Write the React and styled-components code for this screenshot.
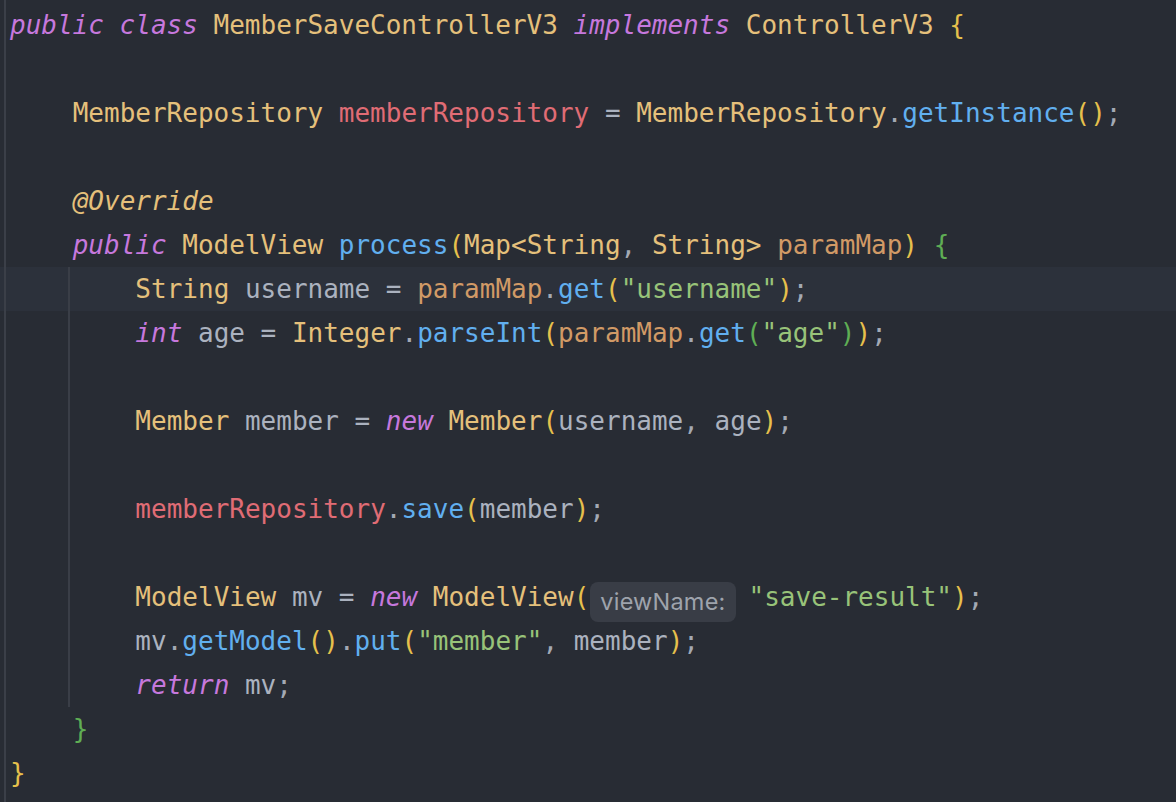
import React from "react";
import styled, { createGlobalStyle } from "styled-components";

const GlobalStyle = createGlobalStyle`
  html, body {
    margin: 0;
    padding: 0;
    background: #282c34;
  }
  body {
    font-family: "DejaVu Sans Mono", "Liberation Mono", monospace;
  }
`;

const COLORS = {
  kw: "#c678dd",
  cls: "#e5c07b",
  field: "#e06c75",
  fn: "#61afef",
  str: "#98c379",
  txt: "#abb2bf",
  param: "#d19a66",
  anno: "#e5c07b",
  b1: "#e6c04c",
  b2: "#5fae54",
  punct: "#a3a9b4",
};

const LEFT_LINE = "linear-gradient(#3b3f48, #3b3f48)";
const GUIDE = "linear-gradient(#3a3e47, #3a3e47)";

const Editor = styled.div`
  min-height: 100vh;
  box-sizing: border-box;
  padding: 3px 0 0 0;
  background-color: #282c34;
  background-image: ${LEFT_LINE};
  background-size: 2px 100%;
  background-position: 4px 0;
  background-repeat: no-repeat;
`;

const Line = styled.div`
  height: 44px;
  line-height: 44px;
  white-space: pre;
  font-size: 26px;
  color: ${COLORS.txt};
  padding-left: ${(p) => 10 + p.$indent * 15.67}px;
  background-color: ${(p) => (p.$current ? "#2c313b" : "transparent")};
  background-image: ${(p) => (p.$guide ? `${LEFT_LINE}, ${GUIDE}` : LEFT_LINE)};
  background-size: 2px 100%;
  background-position: ${(p) => (p.$guide ? "4px 0, 68px 0" : "4px 0")};
  background-repeat: no-repeat;
`;

const T = styled.span`
  color: ${(p) => COLORS[p.$c] || COLORS.txt};
  font-style: ${(p) => (p.$i ? "italic" : "normal")};
`;

const Hint = styled.span`
  display: inline-block;
  box-sizing: border-box;
  height: 40px;
  line-height: 40px;
  padding: 0 10px;
  margin: 0 13px 0 1px;
  border-radius: 8px;
  background: #393d46;
  color: #9ea3ac;
  font-family: Inter, "Noto Sans", sans-serif;
  font-size: 23.5px;
  letter-spacing: 0.2px;
  vertical-align: -4px;
`;

export default function App() {
  return (
    <>
      <GlobalStyle />
      <Editor>
        <Line $indent={0}>
          <T $c="kw" $i>public</T> <T $c="kw" $i>class</T>{" "}
          <T $c="cls">MemberSaveControllerV3</T> <T $c="kw" $i>implements</T>{" "}
          <T $c="cls">ControllerV3</T> <T $c="b1">{"{"}</T>
        </Line>
        <Line $indent={0} />
        <Line $indent={4}>
          <T $c="cls">MemberRepository</T> <T $c="field">memberRepository</T> ={" "}
          <T $c="cls">MemberRepository</T>
          <T $c="punct">.</T>
          <T $c="fn">getInstance</T>
          <T $c="b1">()</T>
          <T $c="punct">;</T>
        </Line>
        <Line $indent={0} />
        <Line $indent={4}>
          <T $c="anno" $i>@Override</T>
        </Line>
        <Line $indent={4}>
          <T $c="kw" $i>public</T> <T $c="cls">ModelView</T> <T $c="fn">process</T>
          <T $c="b1">(</T>
          <T $c="cls">{"Map<String"}</T>
          <T $c="punct">,</T> <T $c="cls">{"String>"}</T> <T $c="param">paramMap</T>
          <T $c="b1">)</T> <T $c="b2">{"{"}</T>
        </Line>
        <Line $indent={8} $guide $current>
          <T $c="cls">String</T> username = <T $c="param">paramMap</T>
          <T $c="punct">.</T>
          <T $c="fn">get</T>
          <T $c="b1">(</T>
          <T $c="str">"username"</T>
          <T $c="b1">)</T>
          <T $c="punct">;</T>
        </Line>
        <Line $indent={8} $guide>
          <T $c="kw" $i>int</T> age = <T $c="cls">Integer</T>
          <T $c="punct">.</T>
          <T $c="fn">parseInt</T>
          <T $c="b1">(</T>
          <T $c="param">paramMap</T>
          <T $c="punct">.</T>
          <T $c="fn">get</T>
          <T $c="b2">(</T>
          <T $c="str">"age"</T>
          <T $c="b2">)</T>
          <T $c="b1">)</T>
          <T $c="punct">;</T>
        </Line>
        <Line $indent={8} $guide />
        <Line $indent={8} $guide>
          <T $c="cls">Member</T> member = <T $c="kw" $i>new</T> <T $c="cls">Member</T>
          <T $c="b1">(</T>username<T $c="punct">,</T> age<T $c="b1">)</T>
          <T $c="punct">;</T>
        </Line>
        <Line $indent={8} $guide />
        <Line $indent={8} $guide>
          <T $c="field">memberRepository</T>
          <T $c="punct">.</T>
          <T $c="fn">save</T>
          <T $c="b1">(</T>member<T $c="b1">)</T>
          <T $c="punct">;</T>
        </Line>
        <Line $indent={8} $guide />
        <Line $indent={8} $guide>
          <T $c="cls">ModelView</T> mv = <T $c="kw" $i>new</T> <T $c="cls">ModelView</T>
          <T $c="b1">(</T>
          <Hint>viewName:</Hint>
          <T $c="str">"save-result"</T>
          <T $c="b1">)</T>
          <T $c="punct">;</T>
        </Line>
        <Line $indent={8} $guide>
          mv<T $c="punct">.</T>
          <T $c="fn">getModel</T>
          <T $c="b1">()</T>
          <T $c="punct">.</T>
          <T $c="fn">put</T>
          <T $c="b1">(</T>
          <T $c="str">"member"</T>
          <T $c="punct">,</T> member<T $c="b1">)</T>
          <T $c="punct">;</T>
        </Line>
        <Line $indent={8} $guide>
          <T $c="kw" $i>return</T> mv<T $c="punct">;</T>
        </Line>
        <Line $indent={4}>
          <T $c="b2">{"}"}</T>
        </Line>
        <Line $indent={0}>
          <T $c="b1">{"}"}</T>
        </Line>
      </Editor>
    </>
  );
}
